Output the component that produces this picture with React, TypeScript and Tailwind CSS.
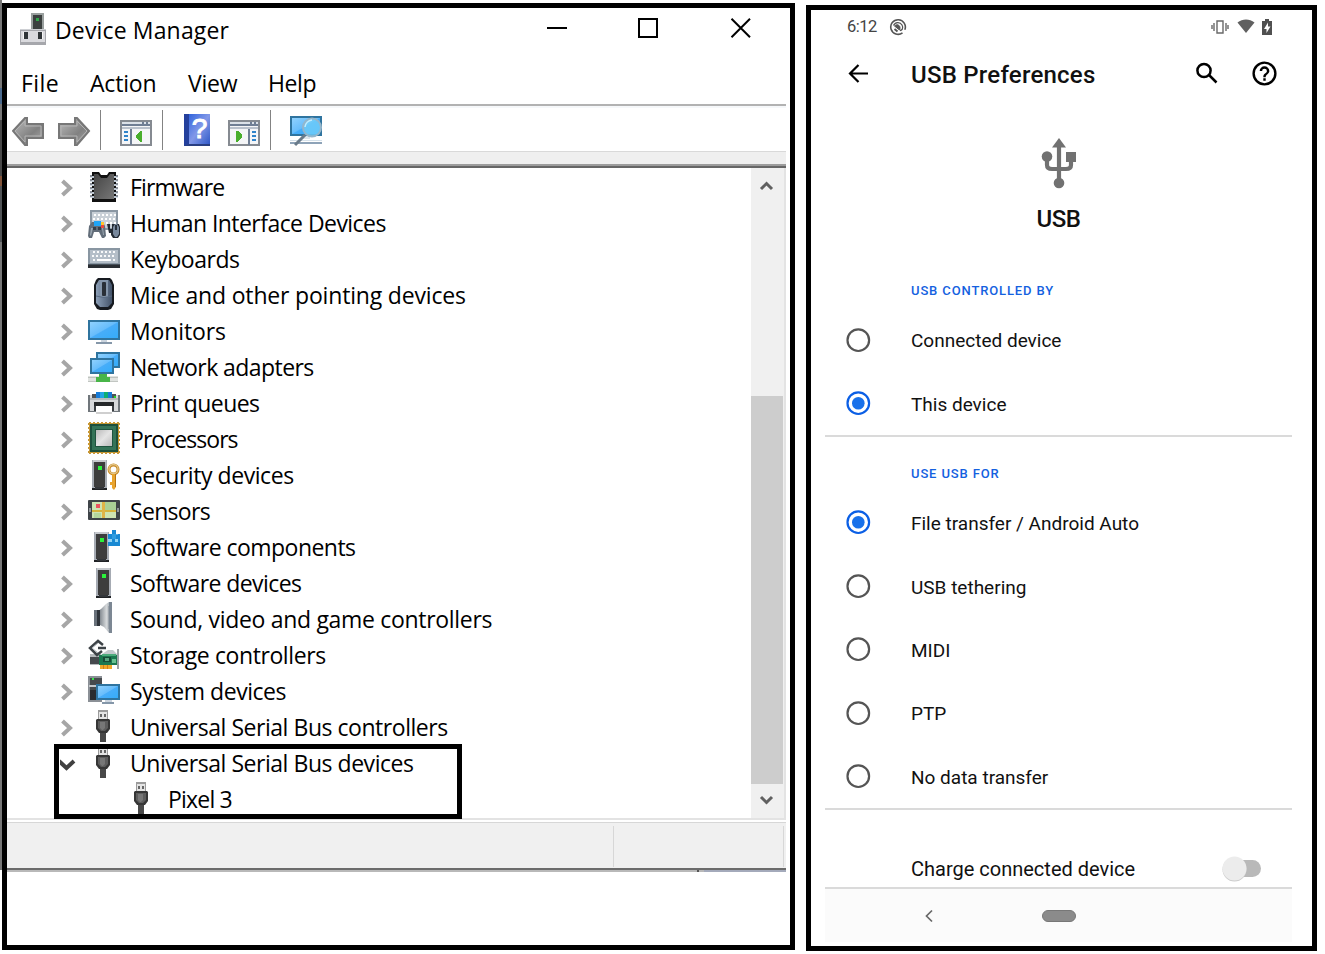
import React from "react";

const devices: [string, string, number][] = [
  ["Firmware", "tracking-[-0.87px]", 0],
  ["Human Interface Devices", "tracking-[-0.55px]", 0],
  ["Keyboards", "tracking-[-0.45px]", 0],
  ["Mice and other pointing devices", "tracking-[-0.18px]", -1],
  ["Monitors", "tracking-[-0.13px]", 1],
  ["Network adapters", "tracking-[-0.56px]", 1],
  ["Print queues", "tracking-[-0.58px]", 1],
  ["Processors", "tracking-[-0.95px]", -1],
  ["Security devices", "tracking-[-0.44px]", 1],
  ["Sensors", "tracking-[-0.68px]", 1],
  ["Software components", "tracking-[-0.53px]", 1],
  ["Software devices", "tracking-[-0.56px]", 1],
  ["Sound, video and game controllers", "tracking-[-0.31px]", 0],
  ["Storage controllers", "tracking-[-0.41px]", 0],
  ["System devices", "tracking-[-0.48px]", 3],
  ["Universal Serial Bus controllers", "tracking-[-0.46px]", -1],
  ["Universal Serial Bus devices", "tracking-[-0.46px]", -1],
];

type Px = [number, number, number, number, string];
const R = ({ d }: { d: Px[] }) => (
  <>{d.map(([x, y, w, h, f], i) => <rect key={i} x={x} y={y} width={w} height={h} fill={f} />)}</>
);

function Screen({ x, y, w, h }: { x: number; y: number; w: number; h: number }) {
  return (
    <>
      <rect x={x} y={y} width={w} height={h} fill="#2f749f" />
      <rect x={x + 2} y={y + 2} width={w - 4} height={h - 4} fill="url(#screen)" />
    </>
  );
}

function Tower({ x, y }: { x: number; y: number }) {
  return <R d={[[x, y, 15, 28, "#a6abb3"], [x + 1, y, 13, 2, "#c6c9ce"], [x + 2, y + 2, 11, 25, "#3d3d3d"], [x + 6, y + 6, 4, 4, "#2bf33b"], [x, y + 28, 15, 2, "#202225"], [x + 3, y + 27, 9, 2, "#33363a"]]} />;
}

function Usb() {
  return (
    <>
      <R d={[[10, 0, 10, 11, "#9b9b9b"], [11, 2, 8, 8, "#e4e4e4"], [12, 4, 2, 3, "#666"], [16, 4, 2, 3, "#666"], [12, 22, 6, 10, "#484848"]]} />
      <path d="M8 10l1-1h12l1 1v9l-3 4h-8l-3-4z" fill="#363636" />
      <path d="M10 11h10v7l-3 3h-4l-3-3z" fill="#5d5d5d" />
      <path d="M12 12h5v6l-2 2h-1l-2-2z" fill="#777" />
    </>
  );
}

function DeviceIcon({ i }: { i: number }) {
  switch (i) {
    case 0:
      return (
        <>
          {[4, 8, 12, 16, 20, 24].map((y) => <R key={y} d={[[2, y, 28, 2, "#8b919a"], [2, y + 2, 28, 1, "#d5dde6"]]} />)}
          <path d="M4 1h7l2 3h6l2-3h7v30H4z" fill="#111" />
          <path d="M6 3h4l3 4h6l3-4h4v25H6z" fill="url(#chip)" />
          {[4, 8, 12, 16, 20, 24].map((y) => <R key={y} d={[[4, y + 1, 2, 2, "#bcc6d0"], [26, y + 1, 2, 2, "#bcc6d0"]]} />)}
        </>
      );
    case 1:
      return (
        <>
          <R d={[[2, 3, 28, 20, "#8b97a3"], [4, 5, 24, 16, "#c9d0d7"]]} />
          {[0, 1, 2].map((r) => [0, 1, 2, 3, 4, 5].map((c) => <rect key={`${r}-${c}`} x={6 + c * 4 - (r % 2)} y={7 + r * 4} width="2" height="2" fill="#fff" />))}
          <path d="M0 29l1-10 3-4h11l2 4 1 10-2 2h-2l-3-6H6l-2 6H1z" fill="#626d79" />
          <path d="M2 28l1-7h2l-2 8zM14 21h1l1 7h-1z" fill="#9ba8b3" />
          <R d={[[6, 14, 7, 5, "#20a4f5"], [13, 15, 3, 3, "#ffc62c"], [13, 18, 3, 3, "#eb493c"], [5, 20, 3, 3, "#353e48"], [10, 20, 3, 3, "#353e48"]]} />
          <path d="M19 17h3v5h2v-5h7l1 3v8l-2 3h-5l-2-3v-2h-2z" fill="#242b34" />
          <path d="M27 17h2l2 3v7l-2 3h-2l-2-3v-7z" fill="#78889c" />
          <rect x="27" y="18" width="2" height="5" fill="#29323d" />
        </>
      );
    case 2:
      return (
        <>
          <R d={[[0, 5, 32, 16, "#8996a2"], [2, 7, 28, 13, "#b4bec8"], [0, 21, 32, 4, "#292d32"], [0, 21, 32, 1, "#46505a"]]} />
          {[0, 1, 2].map((r) => [0, 1, 2, 3, 4, 5].map((c) => <rect key={`${r}-${c}`} x={5 + c * 4 - (r % 2)} y={8 + r * 4} width="2" height="2" fill="#f8f9fa" />))}
          <rect x="9" y="16" width="13" height="2" fill="#fff" />
        </>
      );
    case 3:
      return (
        <>
          <path d="M10 0h12l2 2 2 5v19l-3 5-3 1h-8l-3-1-3-5V7l2-5z" fill="#161a20" />
          <path d="M11 2h10l3 5v18l-4 4h-8l-4-4V7z" fill="url(#mouse)" />
          <path d="M12 2h8v17h-8z" fill="#8495aa" />
          <rect x="14" y="4" width="4" height="14" rx="1" fill="#292f37" />
          <path d="M8 18q8 3 16 0" stroke="#596b82" fill="none" />
        </>
      );
    case 4:
      return <><Screen x={0} y={4} w={32} h={20} /><R d={[[13, 24, 6, 2, "#ccd5df"], [8, 26, 16, 2, "#8597a9"]]} /></>;
    case 5:
      return (
        <>
          <R d={[[0, 24, 30, 6, "#e0e3e0"], [0, 25, 30, 1, "#bfc3bf"], [0, 29, 30, 1, "#c2c6c2"]]} />
          <path d="M8 30v-5h3v-3h8v3h3v5z" fill="#48b548" />
          <Screen x={8} y={0} w={24} h={16} /><Screen x={2} y={6} w={24} h={16} />
        </>
      );
    case 6:
      return (
        <R d={[[0, 7, 32, 17, "#70767b"], [2, 7, 28, 16, "#d7d9db"], [4, 6, 24, 4, "#4e5256"], [8, 4, 16, 6, "#167bd8"], [12, 4, 4, 6, "#20a4e5"], [16, 4, 4, 6, "#0dae73"], [26, 8, 2, 2, "#20da27"], [2, 10, 28, 2, "#b6babd"], [6, 14, 20, 4, "#26292b"], [6, 18, 2, 5, "#3b3f43"], [24, 18, 2, 5, "#3b3f43"], [8, 18, 16, 7, "#fff"], [8, 24, 16, 2, "#cfcfcf"]]} />
      );
    case 7:
      return (
        <>
          {[1, 5, 9, 13, 17, 21, 25, 29].map((n) => <R key={n} d={[[n, 0, 2, 32, "#c79735"], [0, n, 32, 2, "#c79735"]]} />)}
          <rect x="2" y="2" width="28" height="28" fill="#1d503c" /><rect x="4" y="4" width="24" height="24" fill="#347357" />
          <path d="M7 7h18v18H7z" fill="#1f543e" /><rect x="8" y="8" width="16" height="16" fill="url(#metal)" />
        </>
      );
    case 8:
      return (
        <>
          <Tower x={4} y={0} />
          <circle cx="25.5" cy="9.5" r="4.5" fill="none" stroke="#c98b27" strokeWidth="3" />
          <circle cx="25.5" cy="9" r="4.5" fill="none" stroke="#e2c486" strokeWidth="1.3" />
          <path d="M24 14h4v13l-2 3-2-2v-3h-2v-3h2z" fill="#e9a42d" />
          <path d="M27.5 14v13" stroke="#b67312" />
        </>
      );
    case 9:
      return (
        <>
          <rect y="4" width="32" height="20" rx="1" fill="#3f4448" />
          <R d={[[4, 6, 24, 16, "#cee4b2"], [17, 6, 11, 8, "#aad096"], [4, 14, 24, 2, "#d6b43d"], [14, 6, 3, 16, "#dfb448"], [8, 8, 4, 4, "#ec5360"], [6, 17, 7, 5, "#b4d79d"], [1, 12, 2, 4, "#92989c"], [29, 12, 2, 4, "#92989c"]]} />
        </>
      );
    case 10:
      return <><Tower x={6} y={0} /><path d="M20 2h4v-4h4v4h4v12H20z" fill="#1989d3" /><R d={[[24, 2, 4, 5, "#2f9de0"], [20, 7, 4, 3, "#91d4f4"], [27, 7, 3, 3, "#91d4f4"], [28, 2, 2, 1, "#5ab4e8"]]} /></>;
    case 11:
      return <Tower x={8} y={0} />;
    case 12:
      return (
        <>
          <path d="M10 8l3-2 5-5 3-2h3v31h-3l-5-6-6-3z" fill="url(#speaker)" />
          <path d="M6 7h5v16H6z" fill="#69717a" /><path d="M9 7h3v16H9z" fill="#30353b" />
          <path d="M21-1h3v31h-3z" fill="#7c8793" /><path d="M20 3h1v23h-1z" fill="#9ea5ac" />
        </>
      );
    case 13:
      return (
        <>
          <R d={[[2, 15, 11, 11, "#b6babd"], [2, 18, 9, 7, "#45494d"]]} />
          <path d="M11 17l6-4 3-2h5l4 4v10H11z" fill="#c3c8cc" />
          <R d={[[11, 16, 18, 10, "#1b7850"], [14, 15, 14, 2, "#4caa7b"], [15, 18, 8, 5, "#174b37"], [17, 19, 4, 3, "#59a37f"], [24, 20, 4, 4, "#67c191"], [12, 26, 12, 4, "#eea92b"], [15, 26, 1, 4, "#d57b19"], [19, 26, 1, 4, "#d57b19"], [29, 10, 2, 20, "#9da2a6"]]} />
          <path d="M15 6l-5-4-8 7 7 7 5-4M10 9h8" stroke="#3d4347" strokeWidth="2.5" fill="none" />
          <path d="M10 4L4 9l6 5" stroke="#aab0b5" strokeWidth="1" fill="none" />
        </>
      );
    case 14:
      return (
        <>
          <R d={[[0, -2, 14, 26, "#8b9096"], [2, 0, 12, 22, "#464a4d"], [1, 7, 11, 2, "#c3c7ca"], [4, 0, 2, 2, "#35e847"], [2, 12, 8, 10, "#2a2d30"], [17, 22, 7, 2, "#ccd5df"], [14, 24, 12, 2, "#8597a9"]]} />
          <Screen x={8} y={6} w={24} h={16} />
        </>
      );
    default:
      return <Usb />;
  }
}

function Divider({ className }: { className: string }) {
  return <div className={`h-10 w-px bg-[#838383] ${className}`} />;
}

function ActionWindow({ flip = false }: { flip?: boolean }) {
  return (
    <svg width="32" height="28" viewBox="0 0 32 28" shapeRendering="crispEdges">
      <R d={[[0, 1, 32, 26, "#858a91"], [2, 3, 28, 22, "#f4f5f7"], [2, 3, 28, 2, "#dbe1e8"], [2, 5, 28, 2, "#6f7e94"], [22, 3, 2, 2, "#6f7e94"], [26, 3, 2, 2, "#6f7e94"], [2, 8, 28, 2, "#b9c1cc"]]} />
      {flip
        ? <><R d={[[20, 10, 2, 16, "#6f7e94"]]} />{[12, 16, 20].map((y) => <rect key={y} x="24" y={y} width="4" height="2" fill="#2f83c9" />)}<path d="M8 12h2l4 4v2l-4 5H8z" fill="#48ae2c" /></>
        : <><R d={[[10, 10, 2, 16, "#6f7e94"]]} />{[12, 16, 20].map((y) => <rect key={y} x="4" y={y} width="4" height="2" fill="#2f83c9" />)}<path d="M22 12h-2l-4 4v2l4 5h2z" fill="#48ae2c" /></>}
    </svg>
  );
}

function DeviceManager() {
  return (
    <section className="relative mt-[3px] flex h-[947px] w-[793px] shrink-0 flex-col border-5 border-black bg-white font-['Open_Sans',sans-serif] text-[23px] leading-9 text-black">
      <header className="flex h-[50px] shrink-0 items-start">
        <svg className="ml-[13px] mt-[5px]" width="26" height="32" viewBox="0 0 26 32">
          <R d={[[11, 0, 13, 17, "#9aa09f"], [13, 2, 9, 14, "#3b403f"], [16, 5, 3, 3, "#31a74a"], [0, 16, 26, 16, "#a6a7ac"], [1, 18, 24, 11, "#dadade"], [4, 19, 4, 7, "#303538"], [18, 19, 4, 7, "#303538"], [3, 19, 1, 7, "#f5f5f5"], [22, 19, 1, 7, "#f5f5f5"], [0, 16, 26, 1, "#ced0d4"]]} />
        </svg>
        <h1 className="ml-[9px] mt-1 w-[480px] whitespace-nowrap tracking-[0.15px]">Device Manager</h1>
        <svg className="ml-[12px] mt-2.5" width="206" height="22" viewBox="0 0 206 22" fill="none" stroke="#000" strokeWidth="2">
          <path d="M0 10h20M92 1h18v18H92z" /><path d="M184.5.8l18.5 18.5M203 .8l-18.5 18.5" />
        </svg>
      </header>
      <nav className="flex h-[46px] shrink-0 items-start whitespace-nowrap pl-[14px] pt-[7px] tracking-[-0.2px]">
        <span className="w-[69px] tracking-[0.4px]">File</span><span className="w-[98px]">Action</span><span className="w-20">View</span><span className="tracking-[-0.4px]">Help</span>
      </nav>
      <div className="mr-1 h-0.5 shrink-0 bg-[#b2b2b2]" />
      <div className="mr-1 flex h-[45px] shrink-0 items-start border-t-2 border-[#f6f8fa]">
        <svg className="ml-[5px] mt-2" width="80" height="32" viewBox="0 0 80 32">
          <path d="M1 15L13 2h2v6h16v14H15v7h-2z" fill="url(#arrow)" stroke="#777" strokeWidth="2" />
          <path d="M77 15L65 2h-2v6H47v14h16v7h2z" fill="url(#arrow)" stroke="#777" strokeWidth="2" />
          <path d="M3 15l10-10v5h16v10H13v6zM75 15L65 5v5H49v10h16v6z" stroke="#b4b4b4" fill="none" />
        </svg>
        <Divider className="ml-[8px] mt-0.5" />
        <div className="ml-[19px] mt-[11px]"><ActionWindow /></div>
        <Divider className="ml-[10px] mt-0.5" />
        <div className="ml-[21px] mt-1.5 flex h-8 w-[26px] items-center justify-center border-b-2 border-l-5 border-b-[#293f82] border-l-[#24409d] bg-gradient-to-br from-[#2f63dc] via-[#8298e8] to-[#3158c7] font-['Liberation_Sans',sans-serif] text-[28px] leading-8 text-white [-webkit-text-stroke:1px_white]">?</div>
        <div className="ml-[18px] mt-[11px]"><ActionWindow flip /></div>
        <Divider className="ml-[10px] mt-0.5" />
        <svg className="ml-[19px] mt-2" width="34" height="32" viewBox="0 0 34 32">
          <Screen x={0} y={0} w={32} h={20} />
          <R d={[[11, 20, 9, 3, "#dce5eb"], [0, 26, 32, 2, "#8ea3b8"], [0, 24, 32, 1, "#d6e2eb"]]} />
          <path d="M15 19L5 29" stroke="#6a7b8a" strokeWidth="3" /><circle cx="22" cy="11.5" r="9" fill="#70cdf9" fillOpacity=".8" stroke="#95b6cb" strokeWidth="2" />
          <path d="M15 11a8 8 0 017-7" fill="none" stroke="#c3ecfd" strokeWidth="1.5" />
        </svg>
      </div>
      <div className="mr-1 h-[13px] shrink-0 border-t border-[#d9d9d9] bg-[#efefef]" />
      <div className="mr-1 h-1 shrink-0 border-b-2 border-t-2 border-b-[#666] border-t-[#9c9c9c]" />
      <div className="mr-1 flex h-[652px] shrink-0 border-b-2 border-r-2 border-[#e3e3e3]">
        <main className="w-[744px] overflow-hidden pt-px">
          <ul className="flex flex-col">
            {devices.map(([name, tracking, dy], i) => (
              <li key={name} className="flex h-9 items-center whitespace-nowrap">
                <svg className="ml-[53px] shrink-0" width="20" height="20" viewBox="0 0 20 20" fill="none" strokeWidth="4">
                  {i === 16 ? <path d="M-1 8l7.5 7 7.5-7" stroke="#404040" /> : <path d="M2.5 4l7.5 7-7.5 7" stroke="#a6a6a6" />}
                </svg>
                <svg className="ml-2 shrink-0 overflow-visible" width="32" height="32" viewBox="0 0 32 32"><g transform={`translate(0 ${dy})`}><DeviceIcon i={i} /></g></svg>
                <span className={`ml-2.5 ${tracking}`}>{name}</span>
              </li>
            ))}
            <li className="flex h-9 items-center">
              <svg className="ml-[119px] shrink-0 overflow-visible" width="32" height="32" viewBox="0 1 32 32"><Usb /></svg>
              <span className="ml-2.5 tracking-[-0.8px]">Pixel 3</span>
            </li>
          </ul>
        </main>
        <aside className="flex w-[33px] flex-col bg-[#f0f0f0]">
          <svg width="33" height="228" viewBox="0 0 33 228"><path d="M10 21l5.5-5.5L21 21" fill="none" stroke="#606060" strokeWidth="3" /></svg>
          <div className="h-[388px] w-8 bg-[#cdcdcd]" />
          <svg width="33" height="34" viewBox="0 0 33 34"><path d="M10 13l5.5 5.5L21 13" fill="none" stroke="#606060" strokeWidth="3" /></svg>
        </aside>
      </div>
      <footer className="mr-1 mt-0.5 flex h-[46px] shrink-0 border-t border-[#d7d7d7] bg-[#f0f0f0] pt-[3px]">
        <div className="h-[41px] w-[607px] border-r border-[#d7d7d7]" /><div className="h-[41px] w-[170px] border-r border-[#d7d7d7]" />
      </footer>
      <div className="mr-1 h-0.5 shrink-0 bg-[#6b6b6b]" />
      <div className="mr-1 flex h-0.5 shrink-0 bg-[#b9b9b9]"><span className="ml-[690px] w-0.5 bg-[#555]" /><span className="ml-[5px] grow bg-[#a4aabb]" /></div>
      <div className="absolute left-[47px] top-[736px] h-[75px] w-[408px] border-5 border-black" />
    </section>
  );
}

function Radio({ checked = false, label }: { checked?: boolean; label: string }) {
  return (
    <div className="flex h-[63.4px] shrink-0 items-center">
      <svg className="ml-5 shrink-0" width="26" height="26" viewBox="0 0 26 26">
        <circle cx="13.3" cy="13.2" r="10.8" fill="none" stroke={checked ? "#0b5fe5" : "#555"} strokeWidth="2.2" />
        {checked && <circle cx="13.3" cy="13.2" r="6.3" fill="#1971ea" />}
      </svg>
      <span className="ml-[40px] whitespace-nowrap pt-1">{label}</span>
    </div>
  );
}

function Phone() {
  return (
    <section className="ml-[11px] mt-[5px] flex h-[946px] w-[511px] shrink-0 flex-col border-5 border-black bg-white pl-3.5 font-['Roboto',sans-serif] text-[19px] text-[#111]">
      <div className="flex h-[33px] shrink-0 items-center text-[16.5px] tracking-[-0.5px] text-[#444]">
        <span className="ml-[22px] w-[42px] pt-px">6:12</span>
        <svg width="18" height="18" viewBox="0 0 18 18" fill="none" stroke="#555"><path d="M13.5 14.8A7.3 7.3 0 1115.8 11.8" strokeWidth="1.6" /><path d="M4.5 7.5C6 4 11 3.5 13 7s-.5 5.5-2 5.5" strokeWidth="1.3" /><path d="M5.5 8c3-3 7 0 5 4z" fill="#555" /><path d="M5.5 11l3 2.5" strokeWidth="2" /></svg>
        <svg className="ml-[304px]" width="64" height="18" viewBox="0 0 64 18"><path d="M6 3h6v12H6zM3 5v8M15 5v8M1 7v4M17 7v4" fill="none" stroke="#686868" strokeWidth="1.4" /><path d="M26.5 4.5c5-4 12-4 17 0L35 15z" fill="#606060" /><path d="M51 3h3V1h4v2h3v14H51z" fill="#505050" /><path d="M57 4.5L53 11h2.5v4l4-6.5H57z" fill="#fff" /></svg>
      </div>
      <header className="flex h-[61px] shrink-0 items-center">
        <svg className="ml-[22px] mt-px" width="24" height="24" viewBox="0 0 24 24" fill="none" stroke="#000" strokeWidth="2.2"><path d="M21 11.5H3M11.5 3L3 11.5l8.500 8.500" /></svg>
        <h2 className="ml-10 w-[284px] whitespace-nowrap pt-[3px] text-[24px] font-medium tracking-[0.23px]">USB Preferences</h2>
        <svg width="24" height="24" viewBox="0 0 24 24" fill="none" stroke="#000" strokeWidth="2.5"><circle cx="9" cy="8.5" r="6.6" /><path d="M14 13l7.5 7.5" /></svg>
        <svg className="ml-[31px]" width="29" height="29" viewBox="0 0 24 24"><path fill="#000" d="M11 18h2v-2h-2v2zm1-16a10 10 0 100 20 10 10 0 000-20zm0 18a8 8 0 110-16 8 8 0 010 16zm0-14a4 4 0 00-4 4h2a2 2 0 114 0c0 2-3 1.75-3 5h2c0-2.25 3-2.5 3-5a4 4 0 00-4-4z" /></svg>
      </header>
      <div className="flex h-[166px] w-[467px] shrink-0 flex-col items-center">
        <svg className="mt-[33px]" width="36" height="52" viewBox="0 0 36 52"><path d="M6 20v8q0 4 5 4h14q5 0 5-4v-8M18 6v40" fill="none" stroke="#717171" strokeWidth="4.2" /><path d="M11 10.500L18 1l7 9.500z" fill="#717171" /><path d="M25 15h10v10H25z" fill="#717171" /><circle cx="6" cy="19.5" r="5.3" fill="#717171" /><circle cx="18" cy="46" r="5.3" fill="#717171" /></svg>
        <div className="mt-3.5 text-[24px] font-medium leading-8 tracking-[-0.4px]">USB</div>
      </div>
      <h3 className="ml-[86px] h-[38px] shrink-0 pt-[11px] text-[13px] font-medium leading-5 tracking-[0.87px] text-[#1461df]">USB CONTROLLED BY</h3>
      <Radio label="Connected device" />
      <Radio label="This device" checked />
      <div className="h-0.5 w-[467px] shrink-0 bg-[#dadada]" />
      <h3 className="ml-[86px] h-[54px] shrink-0 pt-[27px] text-[13px] font-medium leading-5 tracking-[0.87px] text-[#1461df]">USE USB FOR</h3>
      <Radio label="File transfer / Android Auto" checked />
      <Radio label="USB tethering" /><Radio label="MIDI" /><Radio label="PTP" /><Radio label="No data transfer" />
      <div className="h-0.5 w-[467px] shrink-0 bg-[#dadada]" />
      <div className="flex h-[77px] shrink-0 items-end pb-1">
        <span className="ml-[86px] w-[310px] text-[20px] leading-7">Charge connected device</span>
        <svg width="42" height="30" viewBox="0 0 42 30"><rect x="9" y="7" width="31" height="17" rx="8.5" fill="#b9b9b9" /><circle cx="13.5" cy="16.5" r="12" fill="#ccc" /><circle cx="13.5" cy="15.5" r="12" fill="#ececec" /></svg>
      </div>
      <nav className="flex h-[55px] w-[467px] shrink-0 items-center border-t-2 border-[#dadada] bg-[#fbfbfb] pt-px">
        <svg className="ml-[99px]" width="10" height="14" viewBox="0 0 10 14"><path d="M8 1.500L2.500 7 8 12.500" fill="none" stroke="#686868" strokeWidth="1.7" /></svg>
        <div className="ml-[108px] h-3 w-[34px] rounded-full border border-[#777] bg-[#8b8b8b]" />
      </nav>
    </section>
  );
}

export default function App() {
  return (
    <div className="flex h-[954px] w-[1325px] items-start overflow-hidden bg-white">
      <svg className="absolute size-0"><defs>
        <linearGradient id="screen" x1="0" y1="0" x2="1" y2="1"><stop stopColor="#8fd1fe" /><stop offset=".48" stopColor="#68bdfb" /><stop offset=".52" stopColor="#47adf9" /><stop offset="1" stopColor="#35acf9" /></linearGradient>
        <linearGradient id="chip" x1="0" y1="0" x2="1" y2="1"><stop stopColor="#454545" /><stop offset="1" stopColor="#777" /></linearGradient>
        <linearGradient id="mouse"><stop stopColor="#8b9eb6" /><stop offset="1" stopColor="#43536a" /></linearGradient>
        <linearGradient id="metal" x1="0" y1="0" x2="1" y2="1"><stop stopColor="#bababa" /><stop offset=".5" stopColor="#e4e4e4" /><stop offset="1" stopColor="#bababa" /></linearGradient>
        <linearGradient id="speaker"><stop stopColor="#6c747c" /><stop offset=".6" stopColor="#d5d8da" /><stop offset="1" stopColor="#84909b" /></linearGradient>
        <linearGradient id="arrow" x1="0" y1="0" x2="1" y2="1"><stop stopColor="#bdbdbd" /><stop offset=".6" stopColor="#818181" /><stop offset="1" stopColor="#aaa" /></linearGradient>
      </defs></svg>
      <div className="flex h-[870px] w-0.5 shrink-0 flex-col bg-[#777]">
        <div className="mt-[88px] h-4 bg-[#4b6a8d]" />
        <div className="mt-4 h-14 bg-[#484848]" />
        <div className="h-2.5 bg-[#82543a]" />
        <div className="h-14 bg-[#505356]" />
      </div>
      <DeviceManager />
      <Phone />
    </div>
  );
}
